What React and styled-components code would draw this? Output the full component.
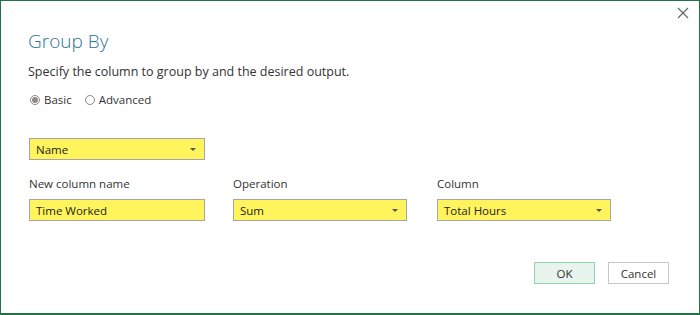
import React from "react";
import styled, { createGlobalStyle } from "styled-components";

const Global = createGlobalStyle`
  html, body { margin: 0; padding: 0; background: #fff; }
  body { font-family: "Segoe UI", "Open Sans", "Noto Sans", sans-serif; }
  * { box-sizing: border-box; }
`;

const Dialog = styled.div`
  position: relative;
  width: 700px;
  height: 315px;
  border: 1px solid #217346;
  border-bottom-width: 2px;
  background: #fff;
  padding: 27px 0 0 27px;
  display: flex;
  flex-direction: column;
  color: #333;
`;

const Close = styled.button`
  position: absolute;
  top: 4px;
  right: 8px;
  width: 16px;
  height: 16px;
  padding: 0;
  border: none;
  background: transparent;
  display: flex;
  align-items: center;
  justify-content: center;
`;

const Title = styled.h1`
  margin: 0;
  font-size: 19px;
  font-weight: 300;
  color: #2f7595;
  line-height: 26px;
`;

const Subtitle = styled.p`
  margin: 9px 0 0;
  font-size: 12.5px;
  line-height: 18px;
  color: #333;
`;

const RadioRow = styled.div`
  display: flex;
  align-items: center;
  gap: 13px;
  margin-top: 11px;
  padding-left: 2px;
  font-size: 11.5px;
`;

const RadioLabel = styled.label`
  display: flex;
  align-items: center;
  gap: 4px;
  color: #333;
`;

const RadioDot = styled.span`
  width: 10px;
  height: 10px;
  border-radius: 50%;
  border: 1px solid #8a8a8a;
  background: #fff;
  display: flex;
  align-items: center;
  justify-content: center;
  &::after {
    content: "";
    width: 6px;
    height: 6px;
    border-radius: 50%;
    background: ${(p) => (p.$checked ? "#8a8a8a" : "transparent")};
  }
`;

const Field = styled.div`
  width: ${(p) => p.$w}px;
  height: 22px;
  background: #fff45c;
  border: 1px solid #a6a6a6;
  display: flex;
  align-items: center;
  justify-content: space-between;
  padding: 0 8px 0 6px;
  font-size: 11.5px;
  color: #222;
`;

const Caret = styled.span`
  width: 0;
  height: 0;
  border-left: 3px solid transparent;
  border-right: 3px solid transparent;
  border-top: 3px solid #555;
`;

const NameWrap = styled.div`
  margin-top: 31px;
  padding-left: 1px;
`;

const Grid = styled.div`
  display: flex;
  margin-top: 16px;
  padding-left: 1px;
`;

const Col = styled.div`
  display: flex;
  flex-direction: column;
  margin-right: ${(p) => p.$gap}px;
`;

const Label = styled.div`
  font-size: 11.5px;
  line-height: 16px;
  margin-bottom: 7px;
  color: #333;
`;

const Footer = styled.div`
  display: flex;
  justify-content: flex-end;
  gap: 13px;
  margin-top: 41px;
  padding-right: 30px;
`;

const Button = styled.button`
  width: 61px;
  height: 22px;
  font-family: inherit;
  font-size: 11.5px;
  color: #333;
  background: ${(p) => (p.$primary ? "#e8f4ed" : "#fff")};
  border: 1px solid ${(p) => (p.$primary ? "#8ed3aa" : "#c8c8c8")};
  padding: 0;
`;

const Select = ({ w, children }) => (
  <Field $w={w}>
    <span>{children}</span>
    <Caret />
  </Field>
);

export default function App() {
  return (
    <>
      <Global />
      <Dialog>
        <Close aria-label="Close">
          <svg width="12" height="12" viewBox="0 0 12 12">
            <path d="M1 1 L11 11 M11 1 L1 11" stroke="#666" strokeWidth="1.2" />
          </svg>
        </Close>
        <Title>Group By</Title>
        <Subtitle>Specify the column to group by and the desired output.</Subtitle>
        <RadioRow>
          <RadioLabel>
            <RadioDot $checked />
            Basic
          </RadioLabel>
          <RadioLabel>
            <RadioDot />
            Advanced
          </RadioLabel>
        </RadioRow>
        <NameWrap>
          <Select w={176}>Name</Select>
        </NameWrap>
        <Grid>
          <Col $gap={28}>
            <Label>New column name</Label>
            <Field $w={176}>Time Worked</Field>
          </Col>
          <Col $gap={30}>
            <Label>Operation</Label>
            <Select w={174}>Sum</Select>
          </Col>
          <Col $gap={0}>
            <Label>Column</Label>
            <Select w={174}>Total Hours</Select>
          </Col>
        </Grid>
        <Footer>
          <Button $primary>OK</Button>
          <Button>Cancel</Button>
        </Footer>
      </Dialog>
    </>
  );
}
